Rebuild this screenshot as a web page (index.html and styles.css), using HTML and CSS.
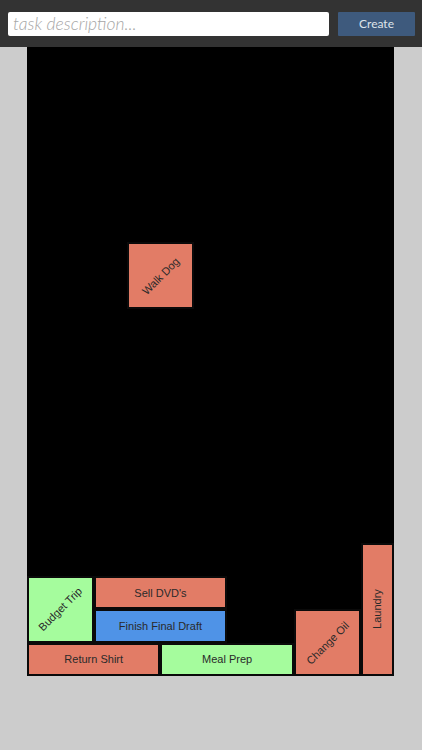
FILE: index.html
```html
<!DOCTYPE html>
<html>
<head>
<meta charset="utf-8">
<link rel="stylesheet" href="styles.css">
</head>
<body>
<header class="bar">
  <input class="task-input" type="text" placeholder="task description...">
  <button class="create-btn">Create</button>
</header>
<main class="stage">
  <div class="board">
    <div class="block salmon" style="left:100.08px;bottom:366.96px;width:66.72px;height:66.72px;"><span class="label diag">Walk Dog</span></div>
    <div class="block green" style="left:0px;bottom:33.36px;width:66.72px;height:66.72px;"><span class="label diag">Budget Trip</span></div>
    <div class="block salmon" style="left:66.72px;bottom:66.72px;width:133.44px;height:33.36px;"><span class="label">Sell DVD's</span></div>
    <div class="block blue" style="left:66.72px;bottom:33.36px;width:133.44px;height:33.36px;"><span class="label">Finish Final Draft</span></div>
    <div class="block salmon" style="left:0px;bottom:0px;width:133.44px;height:33.36px;"><span class="label">Return Shirt</span></div>
    <div class="block green" style="left:133.44px;bottom:0px;width:133.44px;height:33.36px;"><span class="label">Meal Prep</span></div>
    <div class="block salmon" style="left:266.88px;bottom:0px;width:66.72px;height:66.72px;"><span class="label diag">Change Oil</span></div>
    <div class="block salmon" style="left:333.6px;bottom:0px;width:33.4px;height:133.44px;"><span class="label vert">Laundry</span></div>
  </div>
</main>
</body>
</html>
```
FILE: styles.css
```css
html, body {
  margin: 0;
  padding: 0;
  background: #cccccc;
  height: 100%;
}
body {
  font-family: "Liberation Sans", Arial, sans-serif;
}
.bar {
  height: 47px;
  box-sizing: border-box;
  background: #333333;
  display: flex;
  align-items: center;
  padding: 0 7px 0 8px;
  gap: 9px;
}
.task-input {
  flex: 1;
  height: 24px;
  box-sizing: border-box;
  border: none;
  border-radius: 2px;
  background: #ffffff;
  padding: 0 5px;
  font-family: Lato, "Open Sans", sans-serif;
  font-style: italic;
  font-weight: 300;
  font-size: 17.5px;
  color: #333;
  outline: none;
}
.task-input::placeholder {
  color: #a6a6a6;
}
.create-btn {
  width: 77px;
  height: 24px;
  border: none;
  border-radius: 1px;
  background: #3e5a7d;
  color: #dfe4ea;
  font-family: Lato, "Open Sans", sans-serif;
  font-size: 12px;
  padding: 0;
}
.stage {
  padding-left: 27px;
}
.board {
  position: relative;
  width: 367px;
  height: 629px;
  background: #000000;
}
.block {
  position: absolute;
  box-sizing: border-box;
  border: 2px solid #0a0a0a;
  display: flex;
  align-items: center;
  justify-content: center;
  overflow: hidden;
}
.salmon { background: #e27c66; }
.green { background: #a5fc9d; }
.blue { background: #4f93e7; }
.label {
  font-size: 11px;
  color: #2a2a2a;
  white-space: nowrap;
}
.diag {
  transform: rotate(-45deg);
}
.vert {
  transform: rotate(-90deg);
}
```
